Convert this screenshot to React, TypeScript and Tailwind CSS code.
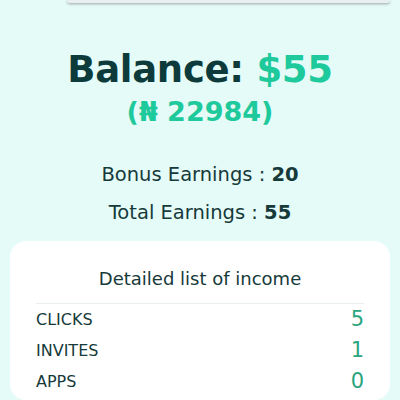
export default function App() {
  const font = { fontFamily: '"DejaVu Sans", "Noto Sans", sans-serif' };
  return (
    <div className="w-[400px] h-[400px] overflow-hidden bg-[#e5fbf8] flex flex-col" style={font}>
      <div className="ml-[67px] mr-[10px] h-[3px] bg-[#e9efee] rounded-b-[4px] shadow-[0_1px_3px_rgba(0,0,0,0.35)]" />
      <div className="mt-[47px] flex flex-col items-center">
        <div className="text-[37px] leading-[40px] font-bold text-[#0d3b3b] tracking-[-0.3px]">
          Balance: <span className="text-[#1ec99b]">$55</span>
        </div>
        <div className="mt-[6px] text-[27px] leading-[32px] font-bold text-[#1ec99b]">(₦ 22984)</div>
      </div>
      <div className="mt-[35px] flex flex-col items-center text-[19.5px] leading-[24px] text-[#163a3a]">
        <div>
          Bonus Earnings : <span className="font-bold">20</span>
        </div>
        <div className="mt-[14px]">
          Total Earnings : <span className="font-bold">55</span>
        </div>
      </div>
      <div className="mt-[16px] mx-[10px] bg-white rounded-[16px] flex-1 px-[26px] pt-[26px]">
        <div className="text-center text-[18px] leading-[24px] text-[#163a3a]">Detailed list of income</div>
        <div className="mt-[12px] h-px bg-[#e8eeee]" />
        <div className="flex flex-col text-[16px] text-[#163a3a]">
          <div className="flex items-center justify-between h-[31px]">
            <span>CLICKS</span>
            <span className="text-[21px] font-medium text-[#2aa57e]">5</span>
          </div>
          <div className="flex items-center justify-between h-[31px]">
            <span>INVITES</span>
            <span className="text-[21px] font-medium text-[#2aa57e]">1</span>
          </div>
          <div className="flex items-center justify-between h-[31px]">
            <span>APPS</span>
            <span className="text-[21px] font-medium text-[#2aa57e]">0</span>
          </div>
        </div>
      </div>
    </div>
  );
}
